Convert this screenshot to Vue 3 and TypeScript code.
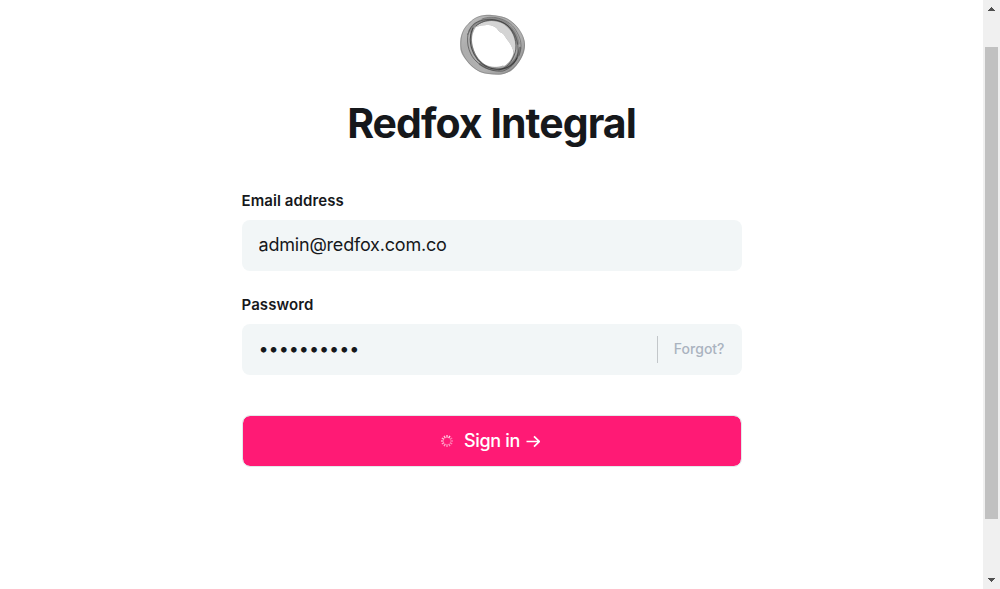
<script setup lang="ts">
import { ref } from 'vue'

const email = ref<string>('admin@redfox.com.co')
const password = ref<string>('redfox2024')

interface Spoke {
  angle: number
  opacity: number
}

const spokes: Spoke[] = Array.from({ length: 12 }, (_, i) => ({
  angle: i * 30,
  opacity: 0.4 + ((i + 10) % 12) * 0.04,
}))
</script>

<template>
  <div class="screen">
    <main class="page">
      <svg class="logo" width="66" height="62" viewBox="0 0 66 62" aria-label="Redfox Integral">
        <defs>
          <linearGradient id="band" x1="0" y1="0" x2="1" y2="1">
            <stop offset="0" stop-color="#c4c4c4" />
            <stop offset="0.3" stop-color="#adadad" />
            <stop offset="0.65" stop-color="#b0b0b0" />
            <stop offset="1" stop-color="#8a8a8a" />
          </linearGradient>
        </defs>
        <path
          fill="url(#band)"
          fill-rule="evenodd"
          d="M10 8 C14 4 19 1.5 25 1 C30 .5 34 1.5 38 2 C43 2.5 47 4 51 7 C55 10 58 13 60 17 C63 21 65 26 65 31 C65 35 64 40 61 45 C58 50 55 54 51 57 C46 60 41 61 36 60.5 C30 60 25 60 20 58 C14 55 9 51 6 46 C3 42 0 38 .3 33 C0 28 0 24 2 19 C4 14 7 11 10 8 Z M16 13 C12 19 11 26 13 33 C15 40 18 46 24 50 C30 54 38 54.5 44 52 C49 49 52 45 53.5 39 C53 34 51 31 49 28 C46 25 45 21 42 19 C38 18 38 14 34 12.5 C29 10 22 11 16 13 Z"
        />
        <path fill="#d4d4d4" d="M15 13 C22 6 36 5 44 10 C53 16 57 28 55 40 C53 36 51 31 49 28 C46 25 45 21 42 19 C38 18 38 14 34 12.5 C29 10 22 11 15 13 Z" />
        <g fill="none" stroke-linecap="round" stroke-linejoin="round">
          <path stroke="#555" stroke-width="3.4" opacity=".4" d="M10 17 C16 5 34 2 45 9 C52 14 57 22 58 29" />
          <path stroke="#444" stroke-width="2.4" opacity=".45" d="M20 50 C28 56 38 57 46 54 C54 50 59 42 60 34" />
          <path stroke="#2f2f2f" stroke-width="1.1" opacity=".75" d="M13 14 C9 22 10 32 14 40 C18 48 26 54 35 55 C44 56 52 53 57 44" />
          <path stroke="#333" stroke-width=".8" opacity=".7" d="M8 20 C6 31 10 42 17 48 C25 55 34 58 43 57 C52 54 59 46 58 35 C58 25 54 16 47 11 C39 5 28 4 20 7 C14 9 10 13 8 20 Z" />
          <path stroke="#333" stroke-width=".9" opacity=".7" d="M16 12 C25 4 39 4 48 12 C54 18 58 29 55 39 C52 48 47 54 39 56" />
          <path stroke="#444" stroke-width=".7" opacity=".65" d="M12 17 C9 29 14 44 25 51 C31 54 38 54 43 52 M22 5 C34 0 49 6 55 15 C61 24 63 32 59 42" />
          <path stroke="#777" stroke-width=".7" opacity=".8" d="M10 8.5 C14 4 19 2 25 1.5 C36 1 46 3 51 7.5 C60 14 65 24 64.5 32 C63 46 52 59 40 60.3 C33 60 26 60 20 57.5 C12 54 1 42 .8 32 C.5 22 3 14 10 8.5 Z" />
        </g>
      </svg>

      <h1 class="title">Redfox Integral</h1>

      <form class="form" @submit.prevent>
        <label class="label" for="email">Email address</label>
        <div class="field">
          <input id="email" v-model="email" class="input" type="text" spellcheck="false" />
        </div>

        <label class="label" for="password">Password</label>
        <div class="field">
          <input id="password" v-model="password" class="input secret" type="password" />
          <a class="forgot">Forgot?</a>
        </div>

        <button class="submit" type="submit">
          <svg class="spinner" width="14" height="14" viewBox="-7 -7 14 14">
            <line
              v-for="s in spokes"
              :key="s.angle"
              x1="0"
              y1="-3.3"
              x2="0"
              y2="-6"
              stroke="#fff"
              stroke-width="1.3"
              :stroke-opacity="s.opacity"
              :transform="`rotate(${s.angle})`"
            />
          </svg>
          <span class="submit-text">Sign in</span>
          <svg class="arrow" width="14" height="14" viewBox="0 0 14 14">
            <path d="M0.5 7.5 H13.2 M8 2.3 L13.2 7.5 L8 12.7" fill="none" stroke="#fff" stroke-width="1.7" />
          </svg>
        </button>
      </form>
    </main>

    <aside class="scrollbar">
      <svg class="cap" width="17" height="17" viewBox="0 0 17 17">
        <path d="M5 11 H12 V10 H11 V9 H10 V8 H9 V7 H8 V8 H7 V9 H6 V10 H5 Z" fill="#505050" />
      </svg>
      <div class="track"><div class="thumb"></div></div>
      <svg class="cap" width="17" height="17" viewBox="0 0 17 17">
        <path d="M5 6 H12 V7 H11 V8 H10 V9 H9 V10 H8 V9 H7 V8 H6 V7 H5 Z" fill="#505050" />
      </svg>
    </aside>
  </div>
</template>

<style>
html,
body {
  margin: 0;
  overflow: hidden;
}
</style>

<style scoped>
.screen {
  display: flex;
  width: 100%;
  height: 589px;
  background: #fff;
  color: #16181b;
  font-family: Inter, "Liberation Sans", sans-serif;
}

.page {
  flex: 1;
  display: flex;
  flex-direction: column;
  align-items: center;
}

.logo {
  display: block;
  margin: 14px 0 0 2px;
}

.title {
  margin: 22px 0 0;
  font-size: 41px;
  line-height: 50px;
  font-weight: 700;
  letter-spacing: -0.95px;
  white-space: nowrap;
}

.form {
  display: flex;
  flex-direction: column;
  width: 500px;
  margin-top: 42px;
}

.label {
  height: 30px;
  font-size: 15px;
  line-height: 22px;
  font-weight: 600;
  letter-spacing: 0.09px;
}

.field {
  display: flex;
  align-items: center;
  box-sizing: border-box;
  height: 51px;
  margin-bottom: 23px;
  padding: 0 17px;
  border-radius: 8px;
  background: #f2f6f7;
}

.input {
  flex: 1;
  min-width: 0;
  height: 49px;
  margin-bottom: 2px;
  padding: 0;
  border: 0;
  outline: 0;
  background: transparent;
  color: inherit;
  font: 400 18px/24px Inter, "Liberation Sans", sans-serif;
  letter-spacing: -0.2px;
}

.secret {
  letter-spacing: -0.04px;
}

.forgot {
  height: 27px;
  margin-bottom: 1px;
  padding-left: 16px;
  border-left: 1px solid #c3c7ca;
  color: #aab3bf;
  font-size: 14px;
  line-height: 25px;
  font-weight: 500;
}

.submit {
  display: flex;
  align-items: center;
  justify-content: center;
  height: 52px;
  margin: 17px 0 0;
  padding: 0 3px 0 0;
  border: 1px solid #e3e8ea;
  border-radius: 8px;
  background: #ff1a75;
  background-clip: padding-box;
  color: #fff;
  font: 500 18px/24px Inter, "Liberation Sans", sans-serif;
  letter-spacing: -0.3px;
}

.submit-text {
  margin: 0 6px 0 10px;
}

.scrollbar {
  display: flex;
  flex-direction: column;
  width: 17px;
  background: #f0f0f0;
}

.cap {
  display: block;
}

.track {
  flex: 1;
  padding: 30px 2px 0;
}

.thumb {
  height: 472px;
  background: #c1c1c1;
}
</style>
